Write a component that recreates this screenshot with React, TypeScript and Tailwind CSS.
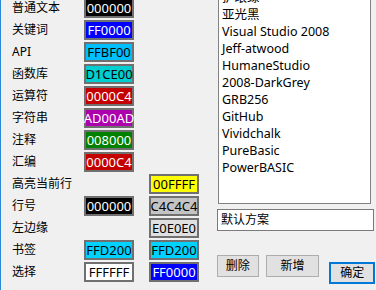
import React from "react";

type Box = { text: string; bg: string; fg: string } | null;
type Row = { label: string; a: Box; b: Box };

const W = "text-white";
const K = "text-black";

const rows: Row[] = [
  { label: "普通文本", a: { text: "000000", bg: "bg-[#000000]", fg: W }, b: null },
  { label: "关键词", a: { text: "FF0000", bg: "bg-[#0000ff]", fg: W }, b: null },
  { label: "API", a: { text: "FFBF00", bg: "bg-[#00bfff]", fg: K }, b: null },
  { label: "函数库", a: { text: "D1CE00", bg: "bg-[#00ced1]", fg: K }, b: null },
  { label: "运算符", a: { text: "0000C4", bg: "bg-[#c40000]", fg: W }, b: null },
  { label: "字符串", a: { text: "AD00AD", bg: "bg-[#ad00ad]", fg: W }, b: null },
  { label: "注释", a: { text: "008000", bg: "bg-[#008000]", fg: W }, b: null },
  { label: "汇编", a: { text: "0000C4", bg: "bg-[#c40000]", fg: W }, b: null },
  { label: "高亮当前行", a: null, b: { text: "00FFFF", bg: "bg-[#ffff00]", fg: K } },
  { label: "行号", a: { text: "000000", bg: "bg-[#000000]", fg: W }, b: { text: "C4C4C4", bg: "bg-[#c4c4c4]", fg: K } },
  { label: "左边缘", a: null, b: { text: "E0E0E0", bg: "bg-[#e0e0e0]", fg: K } },
  { label: "书签", a: { text: "FFD200", bg: "bg-[#00d2ff]", fg: K }, b: { text: "FFD200", bg: "bg-[#00d2ff]", fg: K } },
  { label: "选择", a: { text: "FFFFFF", bg: "bg-[#ffffff]", fg: K }, b: { text: "FF0000", bg: "bg-[#0000ff]", fg: W } },
];

const items = [
  "护眼绿",
  "亚光黑",
  "Visual Studio 2008",
  "Jeff-atwood",
  "HumaneStudio",
  "2008-DarkGrey",
  "GRB256",
  "GitHub",
  "Vividchalk",
  "PureBasic",
  "PowerBASIC",
];

function ColorBox({ box }: { box: Box }) {
  if (!box) return <div className="w-[50px] h-[20px]" />;
  return (
    <div
      className={`w-[50px] h-[20px] border-2 border-[#707070] ${box.bg} ${box.fg} flex items-center justify-center text-[13px] leading-none`}
    >
      {box.text}
    </div>
  );
}

export default function App() {
  return (
    <div
      className="w-[376px] h-[290px] bg-[#f0f0f0] border-l border-[#2b88d8] flex overflow-hidden text-black"
      style={{ fontFamily: '"Noto Sans", "Noto Sans CJK SC", sans-serif' }}
    >
      <div className="w-[216px] pl-[11px] -mt-[2px] flex flex-col shrink-0">
        {rows.map((r, i) => (
          <div key={i} className="h-[22px] flex items-start">
            <div className="w-[72px] h-[20px] flex items-center text-[12px] leading-none">{r.label}</div>
            <ColorBox box={r.a} />
            <div className="w-[15px]" />
            <ColorBox box={r.b} />
          </div>
        ))}
      </div>
      <div className="flex flex-col w-[158px] shrink-0">
        <div className="ml-[1px] w-[153px] h-[216px] -mt-[12px] bg-white border border-[#828282] pt-[1px] pl-[3px] overflow-hidden">
          {items.map((t, i) => (
            <div key={i} className="h-[17px] flex items-center text-[12.5px] leading-none whitespace-nowrap">
              {t}
            </div>
          ))}
        </div>
        <div className="mt-[5px] w-[157px] h-[22px] bg-white border border-[#7a7a7a] flex items-center pl-[3px] text-[12px] leading-none">
          默认方案
        </div>
        <div className="mt-[24px] flex items-start">
          <button className="w-[42px] h-[22px] bg-[#e1e1e1] border border-[#adadad] text-[12px] leading-none flex items-center justify-center">
            删除
          </button>
          <button className="ml-[7px] w-[54px] h-[22px] bg-[#e1e1e1] border border-[#adadad] text-[12px] leading-none flex items-center justify-center">
            新增
          </button>
          <button className="ml-[10px] mt-[7px] w-[46px] h-[22px] bg-[#e1e1e1] border-2 border-[#0078d7] text-[12px] leading-none flex items-center justify-center">
            确定
          </button>
        </div>
      </div>
    </div>
  );
}
